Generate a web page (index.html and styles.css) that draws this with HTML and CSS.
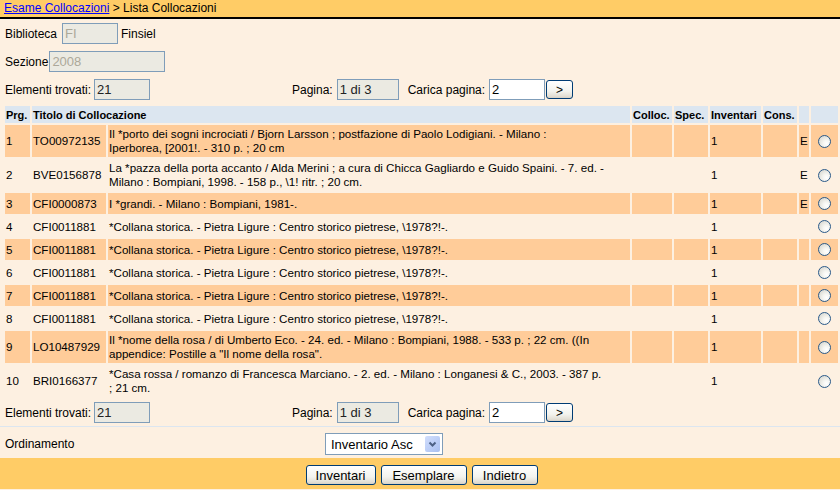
FILE: index.html
```html
<!DOCTYPE html>
<html>
<head>
<meta charset="utf-8">
<title>Lista Collocazioni</title>
<link rel="stylesheet" href="styles.css">
</head>
<body>
<div class="topbar"><a href="#">Esame Collocazioni</a> &gt; Lista Collocazioni</div>

<div class="form">
  <div class="row">
    <span class="lbl">Biblioteca</span>
    <input class="inp dis w56 ml5" value="FI" disabled>
    <span class="lbl ml3">Finsiel</span>
  </div>
  <div class="row">
    <span class="lbl">Sezione</span>
    <input class="inp dis w116 ml1" value="2008" disabled>
  </div>
  <div class="pager top">
    <div class="found"><span class="lbl">Elementi trovati:</span><input class="inp ro w56 ml3" value="21" readonly></div>
    <span class="lbl">Pagina:</span><input class="inp ro w62 ml4" value="1 di 3" readonly>
    <span class="lbl ml9">Carica pagina:</span><input class="inp w56 ml4" value="2">
    <button class="btn go">&gt;</button>
  </div>
</div>

<table class="list">
  <colgroup>
    <col class="c1"><col class="c2"><col class="c3"><col class="c4"><col class="c5"><col class="c6"><col class="c7"><col class="c8"><col class="c9">
  </colgroup>
  <thead>
    <tr class="hd">
      <th>Prg.</th>
      <th colspan="2">Titolo di Collocazione</th>
      <th>Colloc.</th>
      <th>Spec.</th>
      <th>Inventari</th>
      <th>Cons.</th>
      <th></th>
      <th></th>
    </tr>
  </thead>
  <tbody>
    <tr class="r odd"><td>1</td><td>TO00972135</td><td class="t">Il *porto dei sogni incrociati / Bjorn Larsson ; postfazione di Paolo Lodigiani. - Milano :<br>Iperborea, [2001!. - 310 p. ; 20 cm</td><td></td><td></td><td>1</td><td></td><td>E</td><td class="rd"><input type="radio" name="sel"></td></tr>
    <tr class="r"><td>2</td><td>BVE0156878</td><td class="t">La *pazza della porta accanto / Alda Merini ; a cura di Chicca Gagliardo e Guido Spaini. - 7. ed. -<br>Milano : Bompiani, 1998. - 158 p., \1! ritr. ; 20 cm.</td><td></td><td></td><td>1</td><td></td><td>E</td><td class="rd"><input type="radio" name="sel"></td></tr>
    <tr class="r odd"><td>3</td><td>CFI0000873</td><td class="t">I *grandi. - Milano : Bompiani, 1981-.</td><td></td><td></td><td>1</td><td></td><td>E</td><td class="rd"><input type="radio" name="sel"></td></tr>
    <tr class="r"><td>4</td><td>CFI0011881</td><td class="t">*Collana storica. - Pietra Ligure : Centro storico pietrese, \1978?!-.</td><td></td><td></td><td>1</td><td></td><td></td><td class="rd"><input type="radio" name="sel"></td></tr>
    <tr class="r odd"><td>5</td><td>CFI0011881</td><td class="t">*Collana storica. - Pietra Ligure : Centro storico pietrese, \1978?!-.</td><td></td><td></td><td>1</td><td></td><td></td><td class="rd"><input type="radio" name="sel"></td></tr>
    <tr class="r"><td>6</td><td>CFI0011881</td><td class="t">*Collana storica. - Pietra Ligure : Centro storico pietrese, \1978?!-.</td><td></td><td></td><td>1</td><td></td><td></td><td class="rd"><input type="radio" name="sel"></td></tr>
    <tr class="r odd"><td>7</td><td>CFI0011881</td><td class="t">*Collana storica. - Pietra Ligure : Centro storico pietrese, \1978?!-.</td><td></td><td></td><td>1</td><td></td><td></td><td class="rd"><input type="radio" name="sel"></td></tr>
    <tr class="r"><td>8</td><td>CFI0011881</td><td class="t">*Collana storica. - Pietra Ligure : Centro storico pietrese, \1978?!-.</td><td></td><td></td><td>1</td><td></td><td></td><td class="rd"><input type="radio" name="sel"></td></tr>
    <tr class="r odd"><td>9</td><td>LO10487929</td><td class="t">Il *nome della rosa / di Umberto Eco. - 24. ed. - Milano : Bompiani, 1988. - 533 p. ; 22 cm. ((In<br>appendice: Postille a "Il nome della rosa".</td><td></td><td></td><td>1</td><td></td><td></td><td class="rd"><input type="radio" name="sel"></td></tr>
    <tr class="r"><td>10</td><td>BRI0166377</td><td class="t">*Casa rossa / romanzo di Francesca Marciano. - 2. ed. - Milano : Longanesi &amp; C., 2003. - 387 p.<br>; 21 cm.</td><td></td><td></td><td>1</td><td></td><td></td><td class="rd"><input type="radio" name="sel"></td></tr>
  </tbody>
</table>

<div class="pager bottom">
  <div class="found"><span class="lbl">Elementi trovati:</span><input class="inp ro w56 ml3" value="21" readonly></div>
  <span class="lbl">Pagina:</span><input class="inp ro w62 ml4" value="1 di 3" readonly>
  <span class="lbl ml9">Carica pagina:</span><input class="inp w56 ml4" value="2">
  <button class="btn go">&gt;</button>
</div>

<div class="sep"></div>

<div class="order">
  <span class="lbl olbl">Ordinamento</span>
  <div class="sel">
    <select><option>Inventario Asc</option></select>
    <span class="arrow"><svg width="15" height="16" viewBox="0 0 15 16"><path d="M4.5 6.5 L7.5 9.5 L10.5 6.5" fill="none" stroke="#4D6185" stroke-width="2"/></svg></span>
  </div>
</div>

<div class="bar">
  <button class="btn big b-inv">Inventari</button>
  <button class="btn big b-es">Esemplare</button>
  <button class="btn big b-ind">Indietro</button>
</div>
</body>
</html>
```

FILE: styles.css
```css
html, body {
  margin: 0;
  padding: 0;
}
body {
  width: 840px;
  height: 490px;
  overflow: hidden;
  background: #FDF0E1;
  font-family: "Liberation Sans", Arial, sans-serif;
  font-size: 12px;
  color: #000;
}

.topbar {
  height: 17px;
  line-height: 16px;
  background: #FFCC66;
  border-bottom: 2px solid #000;
  padding-left: 4px;
  font-size: 12px;
  white-space: nowrap;
}
.topbar a {
  color: #0000FF;
  text-decoration: underline;
}

.form {
  padding: 4px 0 0 5px;
}
.row {
  display: flex;
  align-items: center;
  height: 21px;
  margin-bottom: 7px;
}
.lbl {
  white-space: nowrap;
  line-height: 14px;
}

.inp {
  box-sizing: border-box;
  height: 21px;
  margin: 0;
  padding: 0 2px;
  border: 1px solid #7F9DB9;
  background: #fff;
  color: #000;
  font-family: "Liberation Sans", Arial, sans-serif;
  font-size: 13px;
  outline: none;
}
.dis {
  background: #EBEAE2;
  color: #ACA899;
}
.ro {
  background: #EBEAE2;
  color: #222;
}
.w56 { width: 56px; }
.w62 { width: 62px; }
.w116 { width: 116px; }
.ml1 { margin-left: 1px; }
.ml3 { margin-left: 3px; }
.ml4 { margin-left: 4px; }
.ml5 { margin-left: 5px; }
.ml9 { margin-left: 9px; }

.pager {
  display: flex;
  align-items: center;
  height: 21px;
}
.pager.top {
  margin-bottom: 4px;
}
.pager.bottom {
  margin-top: 3px;
  padding-left: 5px;
}
.found {
  width: 287px;
  display: flex;
  align-items: center;
}

.btn {
  box-sizing: border-box;
  margin: 0;
  padding: 0;
  border: 1px solid #003C74;
  border-radius: 3px;
  background: linear-gradient(#FFFFFF 0%, #F3F3EE 60%, #E2DED4 90%, #D6D0C5 100%);
  color: #000;
  font-family: "Liberation Sans", Arial, sans-serif;
  font-size: 12px;
  cursor: default;
}
.go {
  width: 27px;
  height: 19px;
  margin-left: 1px;
  font-size: 12px;
}

.list {
  table-layout: fixed;
  border-collapse: separate;
  border-spacing: 2px;
  width: 837px;
  margin-left: 3px;
  font-size: 11.6px;
}
.list th, .list td {
  box-sizing: border-box;
  padding: 2px 1px;
  line-height: 14px;
  text-align: left;
  white-space: nowrap;
  overflow: hidden;
  vertical-align: middle;
}
.list th {
  background: #DCE6F0;
  font-weight: bold;
  font-size: 11px;
  height: 17px;
  padding: 1px 1px;
}
.c1 { width: 25px; }
.c2 { width: 74px; }
.c3 { width: 522px; }
.c4 { width: 40px; }
.c5 { width: 34px; }
.c6 { width: 51px; }
.c7 { width: 34px; }
.c8 { width: 10px; }
.c9 { width: 27px; }
.list .r {
  height: 21px;
}
.list .odd td {
  background: #FFCC99;
}
.list td.rd {
  padding: 0;
}
.list td.rd input {
  -webkit-appearance: none;
  appearance: none;
  display: block;
  box-sizing: border-box;
  width: 13px;
  height: 13px;
  margin: 0 auto;
  border: 1px solid #2A5A8A;
  border-radius: 50%;
  background: radial-gradient(circle at 68% 68%, #FFFFFF 0%, #F6F6F2 30%, #D0D0C8 100%);
}

.sep {
  margin-top: 3px;
  border-top: 1px solid #DCE6F0;
}

.order {
  display: flex;
  align-items: center;
  padding: 6px 0 3px 5px;
  height: 22px;
}
.olbl {
  width: 320px;
}
.sel {
  position: relative;
  width: 118px;
  height: 22px;
}
.sel select {
  -webkit-appearance: none;
  appearance: none;
  box-sizing: border-box;
  width: 100%;
  height: 100%;
  margin: 0;
  padding: 0 0 0 5px;
  border: 1px solid #7F9DB9;
  border-radius: 0;
  background: #fff;
  color: #000;
  font-family: "Liberation Sans", Arial, sans-serif;
  font-size: 13px;
  outline: none;
}
.arrow {
  position: absolute;
  right: 3px;
  top: 3px;
  width: 15px;
  height: 16px;
  border-radius: 2px;
  background: linear-gradient(135deg, #D2DEFC 0%, #B9CCF6 60%, #A9BFF0 100%);
  pointer-events: none;
}
.arrow svg {
  display: block;
}

.bar {
  box-sizing: border-box;
  height: 31px;
  background: #FFCC66;
  display: flex;
  justify-content: center;
  padding: 7px 0 0 3px;
}
.big {
  height: 20px;
  font-size: 13px;
  margin: 0 2.5px;
}
.b-inv { width: 70px; }
.b-es { width: 86px; }
.b-ind { width: 66px; }
```
